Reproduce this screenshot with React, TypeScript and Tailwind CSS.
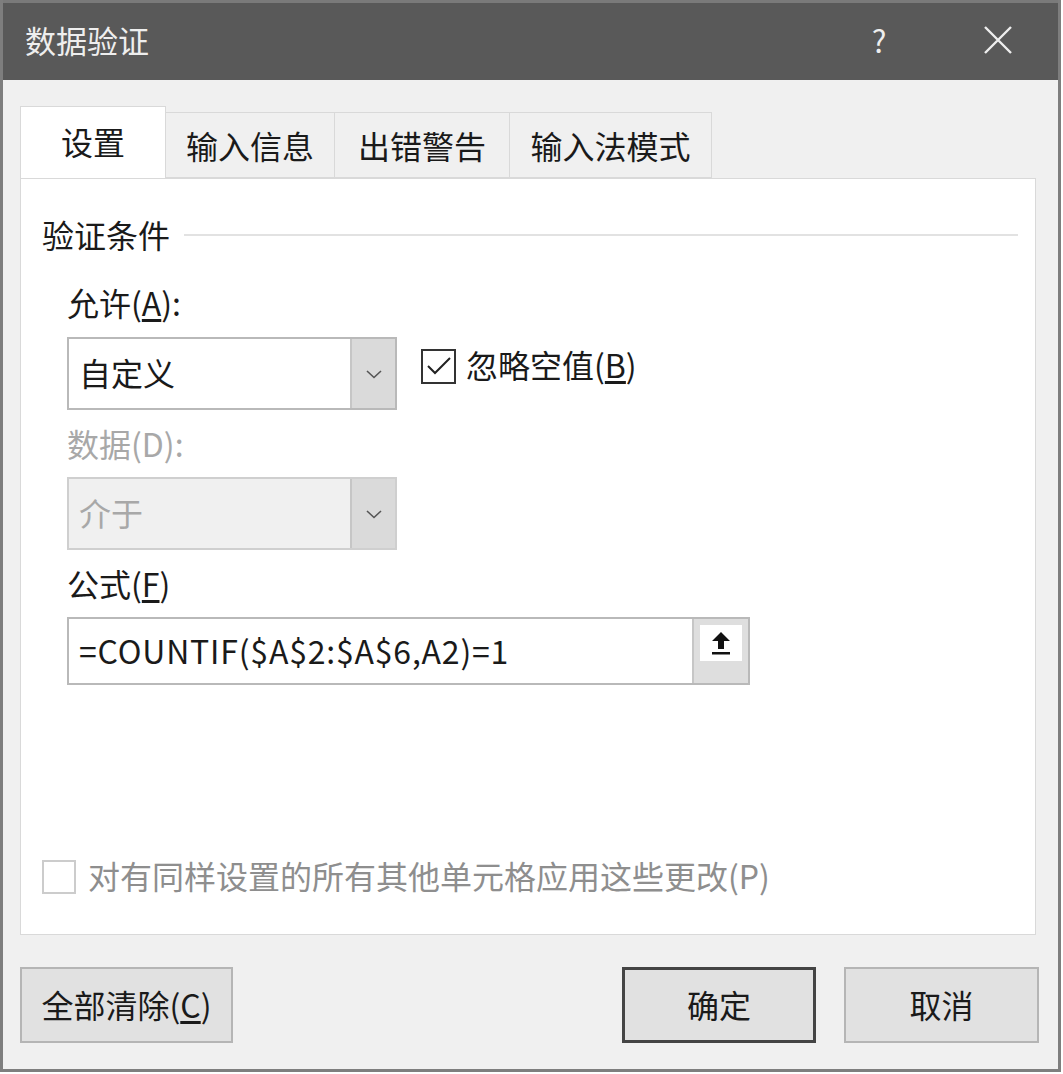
import React from "react";

const F = { fontFamily: '"Noto Sans CJK SC", "Noto Sans", sans-serif' };

function Chevron({ color = "#444" }: { color?: string }) {
  return (
    <svg width="18" height="12" viewBox="0 0 18 12" fill="none">
      <path d="M2 3 L9 9.5 L16 3" stroke={color} strokeWidth="1.6" />
    </svg>
  );
}

function Select({ value, disabled }: { value: string; disabled?: boolean }) {
  return (
    <div
      className={`flex h-[73px] w-[330px] border-2 ${
        disabled ? "border-[#cfcfcf] bg-[#f0f0f0]" : "border-[#b9b9b9] bg-white"
      }`}
    >
      <div
        className={`flex flex-1 items-center pb-[3px] pl-[10px] text-[32px] leading-none ${
          disabled ? "text-[#a8a8a8]" : "text-[#1a1a1a]"
        }`}
      >
        {value}
      </div>
      <div className="flex w-[45px] items-center justify-center border-l-2 border-[#c6c6c6] bg-[#dadada]">
        <Chevron color="#555" />
      </div>
    </div>
  );
}

export default function App() {
  return (
    <div className="h-[1074px] w-[1063px] bg-white" style={F}>
      <div className="flex h-[1072px] w-[1061px] flex-col border-x-[3px] border-b-[3px] border-[#7e7e7e] bg-[#f0f0f0]">
        {/* Title bar */}
        <div className="flex h-[80px] shrink-0 items-center border-t-[3px] border-[#7a7a7a] bg-[#595959] pb-[4px] text-[#eeeeee]">
          <div className="pl-[22px] text-[31px] leading-none">数据验证</div>
          <div className="flex-1" />
          <div className="w-[40px] text-center text-[31px] leading-none">?</div>
          <div className="ml-[79px] mr-[40px] flex h-[40px] w-[40px] items-center justify-center">
            <svg width="30" height="30" viewBox="0 0 30 30">
              <path d="M2 2 L28 28 M28 2 L2 28" stroke="#eeeeee" strokeWidth="2.4" />
            </svg>
          </div>
        </div>

        {/* Body */}
        <div className="flex flex-1 flex-col px-[17px] pt-[27px]">
          {/* Tabs */}
          <div className="flex h-[71px] items-end">
            <div className="relative z-10 flex h-[72px] w-[146px] items-center justify-center border-x border-t border-[#d9d9d9] bg-white pb-[4px] text-[32px] leading-none text-[#1a1a1a]">
              设置
            </div>
            <div className="flex h-[66px] w-[169px] items-center justify-center border-y border-r border-[#d9d9d9] bg-[#f0f0f0] text-[32px] leading-none text-[#1a1a1a]">
              输入信息
            </div>
            <div className="flex h-[66px] w-[175px] items-center justify-center border-y border-r border-[#d9d9d9] bg-[#f0f0f0] text-[32px] leading-none text-[#1a1a1a]">
              出错警告
            </div>
            <div className="flex h-[66px] w-[202px] items-center justify-center border-y border-r border-[#d9d9d9] bg-[#f0f0f0] text-[32px] leading-none text-[#1a1a1a]">
              输入法模式
            </div>
          </div>

          {/* Panel */}
          <div className="flex h-[757px] w-[1016px] flex-col border border-[#d9d9d9] bg-white pt-[37px] text-[#1a1a1a]">
            <div className="flex h-[36px] items-center pl-[21px]">
              <span className="text-[32px] leading-none">验证条件</span>
              <div className="ml-[14px] mr-[17px] mt-[2px] h-[2px] flex-1 bg-[#e2e2e2]" />
            </div>

            <div className="pl-[46px]">
              <div className="mt-[32px] flex h-[36px] items-center text-[32px] leading-none">
                允许(<span className="underline underline-offset-[3px]">A</span>):
              </div>
              <div className="mt-[17px] flex items-center">
                <Select value="自定义" />
                <div className="ml-[24px] -mt-[15px] flex h-[35px] w-[35px] items-center justify-center border-2 border-[#333] bg-white">
                  <svg width="26" height="22" viewBox="0 0 26 22">
                    <path d="M2 11 L9 18 L24 3" stroke="#222" strokeWidth="2" fill="none" />
                  </svg>
                </div>
                <div className="ml-[10px] -mt-[20px] text-[32px] leading-none">
                  忽略空值(<span className="underline underline-offset-[3px]">B</span>)
                </div>
              </div>

              <div className="mt-[15px] flex h-[36px] items-center text-[32px] leading-none text-[#a8a8a8]">
                数据(D):
              </div>
              <div className="mt-[16px]">
                <Select value="介于" disabled />
              </div>

              <div className="mt-[15px] flex h-[36px] items-center text-[32px] leading-none">
                公式(<span className="underline underline-offset-[3px]">F</span>)
              </div>
              <div className="mt-[16px] flex h-[68px] w-[683px] border-2 border-[#b9b9b9] bg-white">
                <div className="flex flex-1 items-center pb-[3px] pl-[10px] text-[32px] leading-none tracking-[0.8px]">
                  =COUNTIF($A$2:$A$6,A2)=1
                </div>
                <div className="flex w-[56px] flex-col items-center border-l-2 border-[#c6c6c6] bg-[#dedede] pt-[6px]">
                  <div className="flex h-[36px] w-[42px] items-center justify-center bg-white">
                    <svg width="24" height="28" viewBox="0 0 24 28">
                      <path d="M12 3 L21 12 L15 12 L15 20 L9 20 L9 12 L3 12 Z" fill="#111" />
                      <rect x="3" y="23" width="18" height="2.5" fill="#111" />
                    </svg>
                  </div>
                </div>
              </div>
            </div>

            <div className="mt-auto mb-[39px] flex h-[36px] items-center pl-[21px]">
              <div className="h-[34px] w-[34px] border-2 border-[#cccccc] bg-white" />
              <span className="ml-[12px] -mt-[4px] text-[32px] leading-none text-[#8e8e8e]">
                对有同样设置的所有其他单元格应用这些更改(P)
              </span>
            </div>
          </div>

          {/* Buttons */}
          <div className="mt-[32px] flex w-[1019px]">
            <div className="flex h-[76px] w-[213px] items-center justify-center border-2 border-[#b5b5b5] bg-[#e1e1e1] pb-[3px] text-[32px] leading-none text-[#1a1a1a]">
              全部清除(<span className="underline underline-offset-[3px]">C</span>)
            </div>
            <div className="flex-1" />
            <div className="flex h-[76px] w-[194px] items-center justify-center border-[3px] border-[#444444] bg-[#e1e1e1] pb-[3px] text-[32px] leading-none text-[#1a1a1a]">
              确定
            </div>
            <div className="ml-[28px] flex h-[76px] w-[195px] items-center justify-center border-2 border-[#b5b5b5] bg-[#e1e1e1] pb-[3px] text-[32px] leading-none text-[#1a1a1a]">
              取消
            </div>
          </div>
        </div>
      </div>
    </div>
  );
}
